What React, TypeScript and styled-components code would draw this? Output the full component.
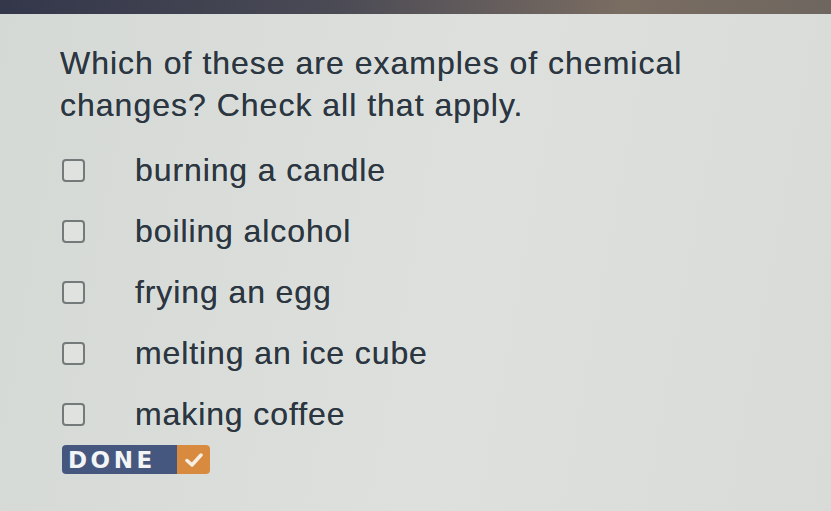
import styled, {createGlobalStyle} from 'styled-components'

const GlobalStyle = createGlobalStyle`
  html, body {
    margin: 0;
    padding: 0;
    height: 100%;
  }
  body {
    background: #d9ddd9;
    font-family: 'Liberation Sans', Arial, sans-serif;
  }
`

const options = [
  'burning a candle',
  'boiling alcohol',
  'frying an egg',
  'melting an ice cube',
  'making coffee',
]

const Screen = styled.div`
  width: 831px;
  height: 511px;
  overflow: hidden;
  background: linear-gradient(100deg, #d5d9d5 0%, #dde0dc 55%, #d8dbd7 100%);
`

const TopBar = styled.div`
  height: 14px;
  background: linear-gradient(90deg, #33374a 0%, #4a4a55 40%, #7a6d62 75%, #6e665f 100%);
`

const Content = styled.div`
  padding: 28px 0 0 60px;
  color: #2b3641;
  text-shadow: 0 0 0.6px rgba(43, 54, 65, 0.7);
`

const Question = styled.h1`
  margin: 0;
  font-size: 32px;
  font-weight: normal;
  line-height: 42px;
  letter-spacing: 1px;
`

const OptionList = styled.ul`
  list-style: none;
  margin: 14px 0 0;
  padding: 0;
  display: flex;
  flex-direction: column;
`

const Option = styled.li`
  display: flex;
  align-items: center;
  height: 61px;
  font-size: 32px;
  letter-spacing: 0.9px;
`

const Box = styled.span`
  width: 23px;
  height: 23px;
  border: 2px solid #737a79;
  border-radius: 4px;
  margin: 0 50px 0 2px;
  box-sizing: border-box;
  background: #dfe2df;
`

const DoneButton = styled.button`
  display: flex;
  align-items: stretch;
  margin: 0 0 0 2px;
  padding: 0;
  border: none;
  border-radius: 4px;
  overflow: hidden;
  height: 29px;
  cursor: pointer;
`

const DoneLabel = styled.span`
  display: flex;
  align-items: center;
  background: #45567f;
  color: #f2f4f6;
  font-family: 'DejaVu Sans', 'Liberation Sans', sans-serif;
  font-weight: bold;
  font-size: 23px;
  letter-spacing: 3.5px;
  padding: 0 0 0 6px;
  width: 109px;
  text-shadow: none;
`

const DoneCheck = styled.span`
  display: flex;
  align-items: center;
  justify-content: center;
  background: #d88a3f;
  width: 33px;
`

export default function App() {
  return (
    <>
      <GlobalStyle />
      <Screen>
        <TopBar />
        <Content>
          <Question>
            Which of these are examples of chemical
            <br />
            changes? Check all that apply.
          </Question>
          <OptionList>
            {options.map((o) => (
              <Option key={o}>
                <Box />
                {o}
              </Option>
            ))}
          </OptionList>
          <DoneButton>
            <DoneLabel>DONE</DoneLabel>
            <DoneCheck>
              <svg width="18" height="16" viewBox="0 0 18 16">
                <path d="M2 8.5 L7 13 L16 3" fill="none" stroke="#f7efe4" strokeWidth="3.5" strokeLinecap="round" strokeLinejoin="round" />
              </svg>
            </DoneCheck>
          </DoneButton>
        </Content>
      </Screen>
    </>
  )
}
